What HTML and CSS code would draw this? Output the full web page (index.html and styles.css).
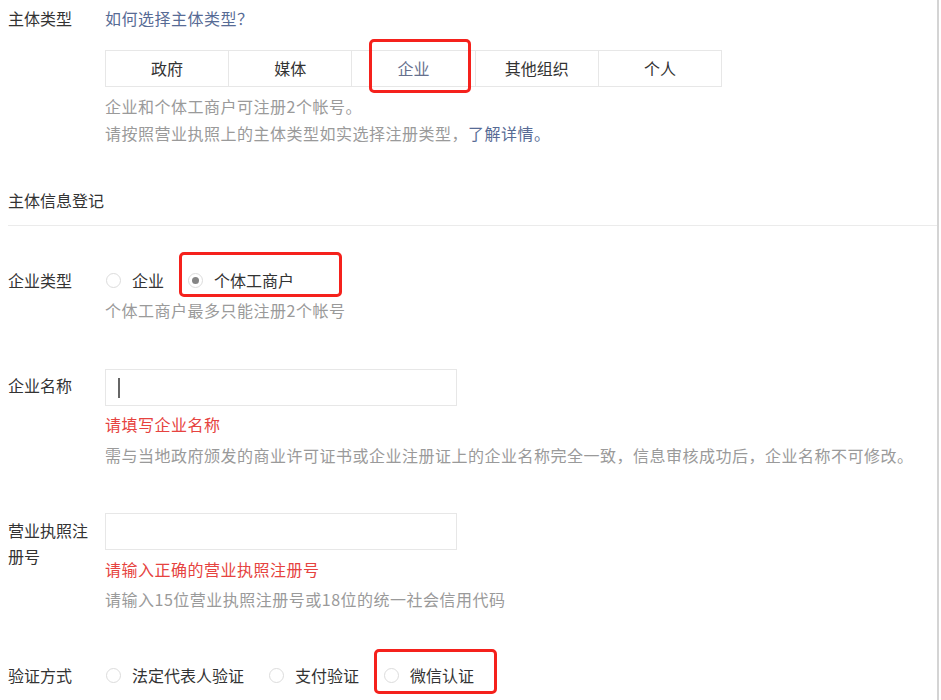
FILE: index.html
```html
<!DOCTYPE html>
<html lang="zh-CN">
<head>
    <meta charset="UTF-8">
    <title>主体信息登记</title>
    <link rel="stylesheet" href="styles.css">
</head>
<body>
<div class="page">

    <div class="form-row row-type">
        <div class="label">主体类型</div>
        <div class="field">
            <a class="link">如何选择主体类型？</a>
            <div class="segments">
                <div class="segment">政府</div>
                <div class="segment">媒体</div>
                <div class="segment selected">企业<span class="mark mark-seg"></span></div>
                <div class="segment">其他组织</div>
                <div class="segment">个人</div>
            </div>
            <div class="hint hint-first">企业和个体工商户可注册2个帐号。</div>
            <div class="hint">请按照营业执照上的主体类型如实选择注册类型，<a class="link">了解详情。</a></div>
        </div>
    </div>

    <div class="section-title">主体信息登记</div>

    <div class="form-row row-kind">
        <div class="label">企业类型</div>
        <div class="field">
            <div class="radios">
                <span class="radio-item"><span class="radio"></span>企业</span>
                <span class="radio-item"><span class="radio checked"></span>个体工商户<span class="mark mark-kind"></span></span>
            </div>
            <div class="hint hint-tight">个体工商户最多只能注册2个帐号</div>
        </div>
    </div>

    <div class="form-row row-name">
        <div class="label label-input">企业名称</div>
        <div class="field">
            <div class="input"><span class="caret"></span></div>
            <div class="error">请填写企业名称</div>
            <div class="hint hint-after">需与当地政府颁发的商业许可证书或企业注册证上的企业名称完全一致，信息审核成功后，企业名称不可修改。</div>
        </div>
    </div>

    <div class="form-row row-license">
        <div class="label label-input label-wrap">营业执照注册号</div>
        <div class="field">
            <div class="input"></div>
            <div class="error error-license">请输入正确的营业执照注册号</div>
            <div class="hint hint-tight">请输入15位营业执照注册号或18位的统一社会信用代码</div>
        </div>
    </div>

    <div class="form-row row-verify">
        <div class="label">验证方式</div>
        <div class="field">
            <div class="radios radios-wide">
                <span class="radio-item"><span class="radio"></span>法定代表人验证</span>
                <span class="radio-item"><span class="radio"></span>支付验证</span>
                <span class="radio-item"><span class="radio"></span>微信认证<span class="mark mark-verify"></span></span>
            </div>
        </div>
    </div>

</div>
</body>
</html>
```

FILE: styles.css
```css
body {
    margin: 0;
    background: #fff;
    font-family: "Noto Sans CJK SC", sans-serif;
    font-size: 16px;
    color: #333;
}
.page {
    width: 929px;
    height: 700px;
    padding-left: 8px;
    border-right: 2px solid #d4d4d4;
    overflow: hidden;
}
.form-row {
    display: grid;
    grid-template-columns: 97px 1fr;
    line-height: 26px;
}
.label {
    color: #333;
}
.label-wrap {
    width: 84px;
}
.row-type {
    padding-top: 5px;
}
.link {
    color: #576b95;
    text-decoration: none;
    letter-spacing: 0.5px;
}
.segments {
    display: flex;
    width: 615px;
    height: 35px;
    margin-top: 19px;
    border: 1px solid #e7e7e7;
}
.segment {
    position: relative;
    flex: 1;
    text-align: center;
    line-height: 35px;
    color: #333;
    border-left: 1px solid #e7e7e7;
}
.segment:first-child {
    border-left: none;
}
.segment.selected {
    color: #66708e;
}
.hint {
    color: #9a9a9a;
    line-height: 27px;
    letter-spacing: 0.5px;
}
.hint-first {
    margin-top: 6px;
}
.hint-tight {
    margin-top: 4px;
    line-height: 26px;
}
.hint-after {
    margin-top: 5px;
    line-height: 26px;
}
.section-title {
    margin-top: 40px;
    line-height: 26px;
    padding-bottom: 12px;
    border-bottom: 1px solid #ebebeb;
}
.row-kind {
    margin-top: 41px;
}
.radios {
    display: flex;
    gap: 23px;
}
.radios-wide {
    gap: 24px;
}
.radio-item {
    position: relative;
    display: inline-flex;
    align-items: center;
}
.radio {
    width: 15px;
    height: 15px;
    margin-left: 1px;
    margin-right: 11px;
    border: 1px solid #dcdcdc;
    border-radius: 50%;
    box-sizing: border-box;
    display: inline-flex;
    align-items: center;
    justify-content: center;
}
.radio.checked::after {
    content: "";
    width: 7px;
    height: 7px;
    border-radius: 50%;
    background: #858585;
}
.row-name {
    margin-top: 46px;
}
.label-input {
    padding-top: 3px;
}
.input {
    position: relative;
    width: 350px;
    height: 35px;
    border: 1px solid #e7e7e7;
}
.caret {
    position: absolute;
    left: 12px;
    top: 8px;
    width: 2px;
    height: 20px;
    background: #666;
}
.error {
    margin-top: 5px;
    color: #e64340;
    letter-spacing: 0.5px;
}
.row-license {
    margin-top: 45px;
}
.row-license .label {
    padding-top: 4px;
}
.error-license {
    margin-top: 6px;
}
.row-verify {
    margin-top: 50px;
}
.mark {
    position: absolute;
    border: 3px solid #f5211c;
    border-radius: 5px;
    pointer-events: none;
}
.mark-seg {
    left: 17px;
    right: 4px;
    top: -12px;
    bottom: -7px;
}
.mark-kind {
    left: -8px;
    right: -48px;
    top: -15px;
    bottom: -4px;
}
.mark-verify {
    left: -9px;
    right: -23px;
    top: -13px;
    bottom: -6px;
}
```
